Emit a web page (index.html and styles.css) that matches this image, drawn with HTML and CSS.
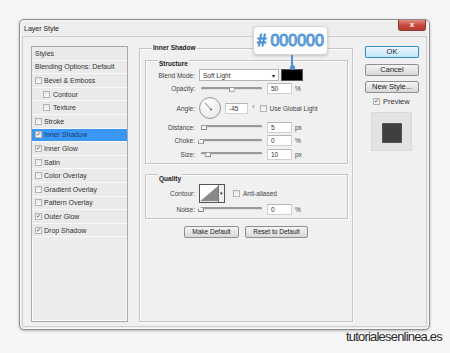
FILE: index.html
```html
<!DOCTYPE html>
<html lang="en">
<head>
    <meta charset="UTF-8">
    <title>Layer Style</title>
    <link rel="stylesheet" href="styles.css">
</head>
<body>
    <div class="window">
        <div class="titlebar">
            <span class="title">Layer Style</span>
            <span class="close">x</span>
        </div>
        <div class="client">
            <!-- lista de estilos -->
            <div class="styles">
                <div class="row head">Styles</div>
                <div class="row head">Blending Options: Default</div>
                <div class="row"><span class="cb"></span>Bevel &amp; Emboss</div>
                <div class="row sub"><span class="cb"></span>Contour</div>
                <div class="row sub"><span class="cb"></span>Texture</div>
                <div class="row"><span class="cb"></span>Stroke</div>
                <div class="row selected"><span class="cb on"></span>Inner Shadow</div>
                <div class="row"><span class="cb on"></span>Inner Glow</div>
                <div class="row"><span class="cb"></span>Satin</div>
                <div class="row"><span class="cb"></span>Color Overlay</div>
                <div class="row"><span class="cb"></span>Gradient Overlay</div>
                <div class="row"><span class="cb"></span>Pattern Overlay</div>
                <div class="row"><span class="cb on"></span>Outer Glow</div>
                <div class="row"><span class="cb on"></span>Drop Shadow</div>
            </div>

            <!-- panel central -->
            <div class="main">
                <div class="group outer">
                    <div class="legend">Inner Shadow</div>
                    <div class="group inner structure">
                        <div class="legend">Structure</div>
                        <div class="field">
                            <label>Blend Mode:</label>
                            <div class="select">Soft Light<span class="arrow">&#9662;</span></div>
                            <div class="swatch"></div>
                        </div>
                        <div class="field">
                            <label>Opacity:</label>
                            <div class="slider"><span class="thumb" style="left: 50%"></span></div>
                            <div class="input">50</div>
                            <span class="unit">%</span>
                        </div>
                        <div class="field angle">
                            <label>Angle:</label>
                            <div class="dial">
                                <svg width="22" height="22" viewBox="0 0 22 22">
                                    <line x1="6" y1="6" x2="12" y2="12.5" stroke="#555" stroke-width="0.8"/>
                                    <circle cx="12" cy="12.5" r="1" fill="#555"/>
                                </svg>
                            </div>
                            <div class="input short">-45</div>
                            <span class="deg">&deg;</span>
                            <span class="cb"></span>
                            <span class="cb-label">Use Global Light</span>
                        </div>
                        <div class="field">
                            <label>Distance:</label>
                            <div class="slider"><span class="thumb" style="left: 5%"></span></div>
                            <div class="input">5</div>
                            <span class="unit">px</span>
                        </div>
                        <div class="field">
                            <label>Choke:</label>
                            <div class="slider"><span class="thumb" style="left: 0%"></span></div>
                            <div class="input">0</div>
                            <span class="unit">%</span>
                        </div>
                        <div class="field">
                            <label>Size:</label>
                            <div class="slider"><span class="thumb" style="left: 12%"></span></div>
                            <div class="input">10</div>
                            <span class="unit">px</span>
                        </div>
                    </div>

                    <div class="group inner quality">
                        <div class="legend">Quality</div>
                        <div class="field contour-row">
                            <label>Contour:</label>
                            <div class="contour">
                                <svg width="20" height="17" viewBox="0 0 20 17">
                                    <rect x="0" y="0" width="20" height="17" fill="#fff"/>
                                    <polygon points="0,17 20,0 20,17" fill="#8a8a8a"/>
                                </svg>
                                <span class="drop">&#9662;</span>
                            </div>
                            <span class="cb"></span>
                            <span class="cb-label">Anti-aliased</span>
                        </div>
                        <div class="field">
                            <label>Noise:</label>
                            <div class="slider"><span class="thumb" style="left: 0%"></span></div>
                            <div class="input">0</div>
                            <span class="unit">%</span>
                        </div>
                    </div>

                    <div class="defaults">
                        <button class="btn make">Make Default</button>
                        <button class="btn reset">Reset to Default</button>
                    </div>
                </div>
            </div>

            <!-- botones laterales -->
            <div class="side">
                <button class="btn side-btn ok">OK</button>
                <button class="btn side-btn">Cancel</button>
                <button class="btn side-btn">New Style...</button>
                <div class="preview-row"><span class="cb on"></span>Preview</div>
                <div class="preview"><div class="preview-square"></div></div>
            </div>
        </div>
    </div>

    <div class="tip"># 000000</div>
    <div class="tip-line"></div>

    <div class="mark">tutorialesenlinea.es</div>
</body>
</html>
```

FILE: styles.css
```css
body { margin: 0; width: 450px; height: 353px; overflow: hidden; position: relative; background: #f6f6f6; font-family: "Liberation Sans", Arial, sans-serif; color: #333; }

.window { box-sizing: border-box; width: 411px; height: 311px; margin: 19px 0 0 19px; border: 1px solid #8c8c8c; border-radius: 5px; background: #eeeeee; box-shadow: 0 1px 3px rgba(0, 0, 0, 0.25), inset 0 0 0 1px #fafafa; }
.titlebar { display: flex; align-items: flex-start; height: 16px; }
.title { font-size: 7px; padding: 5px 0 0 4px; color: #222; }
.close { margin-left: auto; margin-right: 3px; width: 28px; height: 11px; border-radius: 0 0 3px 3px; background: linear-gradient(#e08a7e, #c9473a 55%, #b53a2e); border: 1px solid #8e3a30; border-top: none; box-sizing: border-box; color: #fff; font-size: 8px; font-weight: bold; text-align: center; line-height: 10px; }

.client { box-sizing: border-box; display: flex; height: 291px; margin: 0 2px; padding: 9px 0 0 8px; border: 1px solid #cfcfcf; background: #f0f0f0; }

/* lista de estilos */
.styles { box-sizing: border-box; width: 97px; height: 276px; border: 1px solid #a9a9a9; background: #ececec; box-shadow: inset 0 0 0 1px #f8f8f8; font-size: 7px; color: #333; }
.row { box-sizing: border-box; height: 13.6px; display: flex; align-items: center; padding-left: 3px; border-bottom: 1px solid #f9f9f9; background: #eaeaea; }
.row.head { padding-left: 3px; }
.row.sub { padding-left: 11px; }
.row.selected { background: #3a98f4; color: #1b3b6e; }
.cb { box-sizing: border-box; display: inline-block; width: 7px; height: 7px; margin-right: 2px; border: 1px solid #b3b3b3; background: linear-gradient(#e6e6e6, #fbfbfb); position: relative; flex: none; }
.row.sub .cb { margin-right: 3px; }
.cb.on::after { content: "\2713"; position: absolute; left: 0; top: -2px; font-size: 6px; color: #444; font-family: "DejaVu Sans", sans-serif; }

/* panel central */
.main { margin-left: 11px; }
.group { box-sizing: border-box; border: 1px solid #c4c4c4; box-shadow: 1px 1px 0 #fbfbfb, inset 1px 1px 0 #fbfbfb; }
.legend { display: table; height: 10px; line-height: 10px; margin: -6px 0 0 12px; padding: 0 1px; background: #f0f0f0; font-size: 6.5px; font-weight: bold; color: #222; }
.outer { width: 214px; height: 274px; margin-top: 2px; }
.inner { width: 203px; margin-left: 5px; }
.structure { margin-top: 7px; padding-top: 3.5px; padding-bottom: 1.5px; }
.quality { margin-top: 10px; padding-top: 5px; padding-bottom: 2px; }

.field { display: flex; align-items: center; height: 13.5px; font-size: 6.5px; color: #444; }
.field label { width: 49px; text-align: right; flex: none; }
.field.angle { height: 25px; }
.field.contour-row { height: 19px; }

.select { box-sizing: border-box; display: flex; align-items: center; width: 80px; height: 12px; margin-left: 4px; padding: 0 3px; border: 1px solid #b5b5b5; background: #fff; color: #333; }
.select .arrow { margin-left: auto; font-size: 6px; color: #222; }
.swatch { box-sizing: border-box; width: 22px; height: 12px; margin-left: 2px; background: #000; border: 1px solid #555; }

.slider { position: relative; width: 61px; height: 8px; margin: 0 2px 0 6px; }
.slider::before { content: ""; position: absolute; left: 0; right: 0; top: 2px; height: 2px; background: #9a9a9a; border-bottom: 1px solid #e2e2e2; border-radius: 1px; }
.thumb { position: absolute; top: 2px; width: 6px; height: 5px; margin-left: -3px; background: #f4f4f4; border: 1px solid #8a8a8a; box-sizing: border-box; clip-path: polygon(50% 0, 100% 40%, 100% 100%, 0 100%, 0 40%); }

.input { box-sizing: border-box; width: 25px; height: 11px; margin-left: 3px; padding-left: 3px; line-height: 9px; border: 1px solid #d0d0d0; border-top-color: #b5b5b5; background: #fff; color: #333; }
.input.short { width: 23px; margin-left: 4px; }
.unit { margin-left: 3px; }
.deg { margin: 0 5px 0 4px; }
.cb-label { margin-left: 1px; }

.dial { box-sizing: border-box; width: 22px; height: 22px; margin-left: 4px; border: 1px solid #9b9b9b; border-radius: 50%; background: radial-gradient(circle at 40% 35%, #fff, #e2e2e2); }
.dial svg { display: block; margin: -1px; }

.contour { box-sizing: border-box; display: flex; width: 26px; height: 19px; margin-left: 4px; margin-right: 8px; border: 1px solid #555; background: #fff; }
.contour svg { display: block; }
.contour .drop { width: 5px; border-left: 1px solid #777; font-size: 5px; line-height: 17px; text-align: center; color: #222; background: #eee; }

.defaults { display: flex; justify-content: center; gap: 6px; margin-top: 6.5px; }
.btn { box-sizing: border-box; height: 12px; padding: 0; border: 1px solid #8f8f8f; border-radius: 2px; background: linear-gradient(#f4f4f4, #e6e6e6 50%, #d8d8d8); font-family: "Liberation Sans", Arial, sans-serif; font-size: 6.5px; color: #222; line-height: 10px; }
.make { width: 55px; }
.reset { width: 63px; }

/* botones laterales */
.side { width: 54px; margin-left: 12px; display: flex; flex-direction: column; }
.side-btn { width: 54px; font-size: 7.5px; margin-bottom: 5.5px; }
.ok { border-color: #3d8fc8; background: linear-gradient(#eaf6fd, #d7effc 50%, #bee6fd); box-shadow: 0 0 1px #6ec0ef; }
.preview-row { display: flex; align-items: center; height: 12px; margin-top: -3px; padding-left: 8px; font-size: 7.5px; color: #333; }
.preview-row .cb { margin-right: 3px; }
.preview { box-sizing: border-box; width: 41px; height: 39px; margin: 4px 0 0 6px; padding: 10px; border: 1px solid #d9d9d9; background: #e3e3e3; }
.preview-square { width: 20px; height: 20px; background: #3f3f3f; box-shadow: inset 0 0 2px #8a8a8a; }

/* tooltip de color */
.tip { position: absolute; left: 253px; top: 26px; box-sizing: border-box; width: 75px; height: 29px; border: 1px solid #d6d6d6; border-radius: 4px; background: #fdfdfd; box-shadow: 0 1px 3px rgba(0, 0, 0, 0.2); font-size: 16px; font-weight: normal; line-height: 27px; text-align: center; color: #a6d2f6; -webkit-text-stroke: 1px #4a90d6; text-shadow: 0 0 2px #fff; }
.tip-line { position: absolute; left: 291px; top: 55px; width: 2px; height: 13px; background: #4a90d9; }
.tip-line::after { content: ""; position: absolute; left: -1.5px; bottom: -2px; width: 5px; height: 5px; border-radius: 50%; background: #4a90d9; }

.mark { text-align: right; padding-right: 8px; font-size: 13px; line-height: 13px; letter-spacing: -0.8px; color: #2a2a2a; }
```
